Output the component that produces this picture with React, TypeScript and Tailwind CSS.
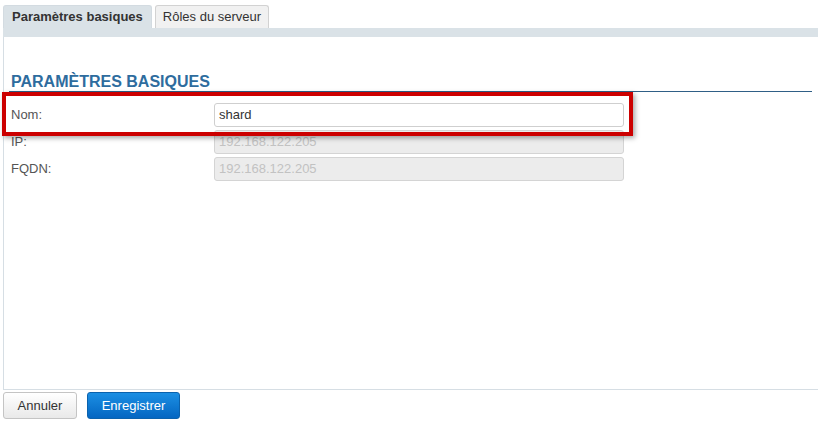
const rows = [
  { label: 'Nom:', value: 'shard', disabled: false },
  { label: 'IP:', value: '192.168.122.205', disabled: true },
  { label: 'FQDN:', value: '192.168.122.205', disabled: true },
]

const App = () => {
  return (
    <div className="relative w-[818px] h-[424px] overflow-hidden bg-white font-['Liberation_Sans',Arial,sans-serif] text-[13px] text-[#333]">
      {/* Onglets */}
      <div className="flex items-end gap-[3px] pt-[5px] pl-[3px]">
        <div className="h-[23px] px-[8px] flex items-center rounded-t-[3px] border border-b-0 border-[#d3dbe1] bg-[#dae2e7] font-bold text-[#333]">
          Paramètres basiques
        </div>
        <div className="h-[23px] px-[7px] flex items-center rounded-t-[3px] border border-b-0 border-[#d2d2d2] bg-[#f1f1f1] text-[#333]">
          Rôles du serveur
        </div>
      </div>
      <div className="ml-[3px] h-[9px] bg-[#dae2e7]" />

      {/* Panneau */}
      <div className="ml-[3px] h-[353px] border-l border-b border-[#d6dee4] pt-[36px] pl-[5px] pr-[6px]">
        <div className="border-b border-[#2f5f86] pl-[2px]">
          <h2 className="leading-[18px] text-[16px] font-bold text-[#2e6c9e]">PARAMÈTRES BASIQUES</h2>
        </div>
        <div className="mt-[11px] flex flex-col gap-[3px] pl-[2px]">
          {rows.map((row) => (
            <div key={row.label} className="flex items-center h-[24px]">
              <label className="w-[203px] text-[#555]">{row.label}</label>
              <div
                className={`w-[410px] h-[24px] flex items-center px-[4px] rounded-[3px] border ${
                  row.disabled ? 'bg-[#ececec] border-[#d4d4d4] text-[#c2c2c2]' : 'bg-white border-[#cfcfcf] text-[#333]'
                }`}
              >
                {row.value}
              </div>
            </div>
          ))}
        </div>
      </div>

      {/* Boutons */}
      <div className="flex gap-[10px] pl-[3px] mt-[2px]">
        <button className="w-[74px] h-[27px] rounded-[3px] border border-[#c4c4c4] bg-gradient-to-b from-white to-[#e9e9e9] text-[#333]">
          Annuler
        </button>
        <button className="w-[93px] h-[27px] rounded-[3px] border border-[#0b62ad] bg-gradient-to-b from-[#1c8fe3] to-[#0466c2] text-white">
          Enregistrer
        </button>
      </div>

      {/* Cadre d'annotation */}
      <div className="absolute left-[2px] top-[92px] w-[631px] h-[44px] border-4 border-[#cc0000] shadow-[2px_2px_5px_rgba(0,0,0,0.35)]" />
    </div>
  )
}

export default App
